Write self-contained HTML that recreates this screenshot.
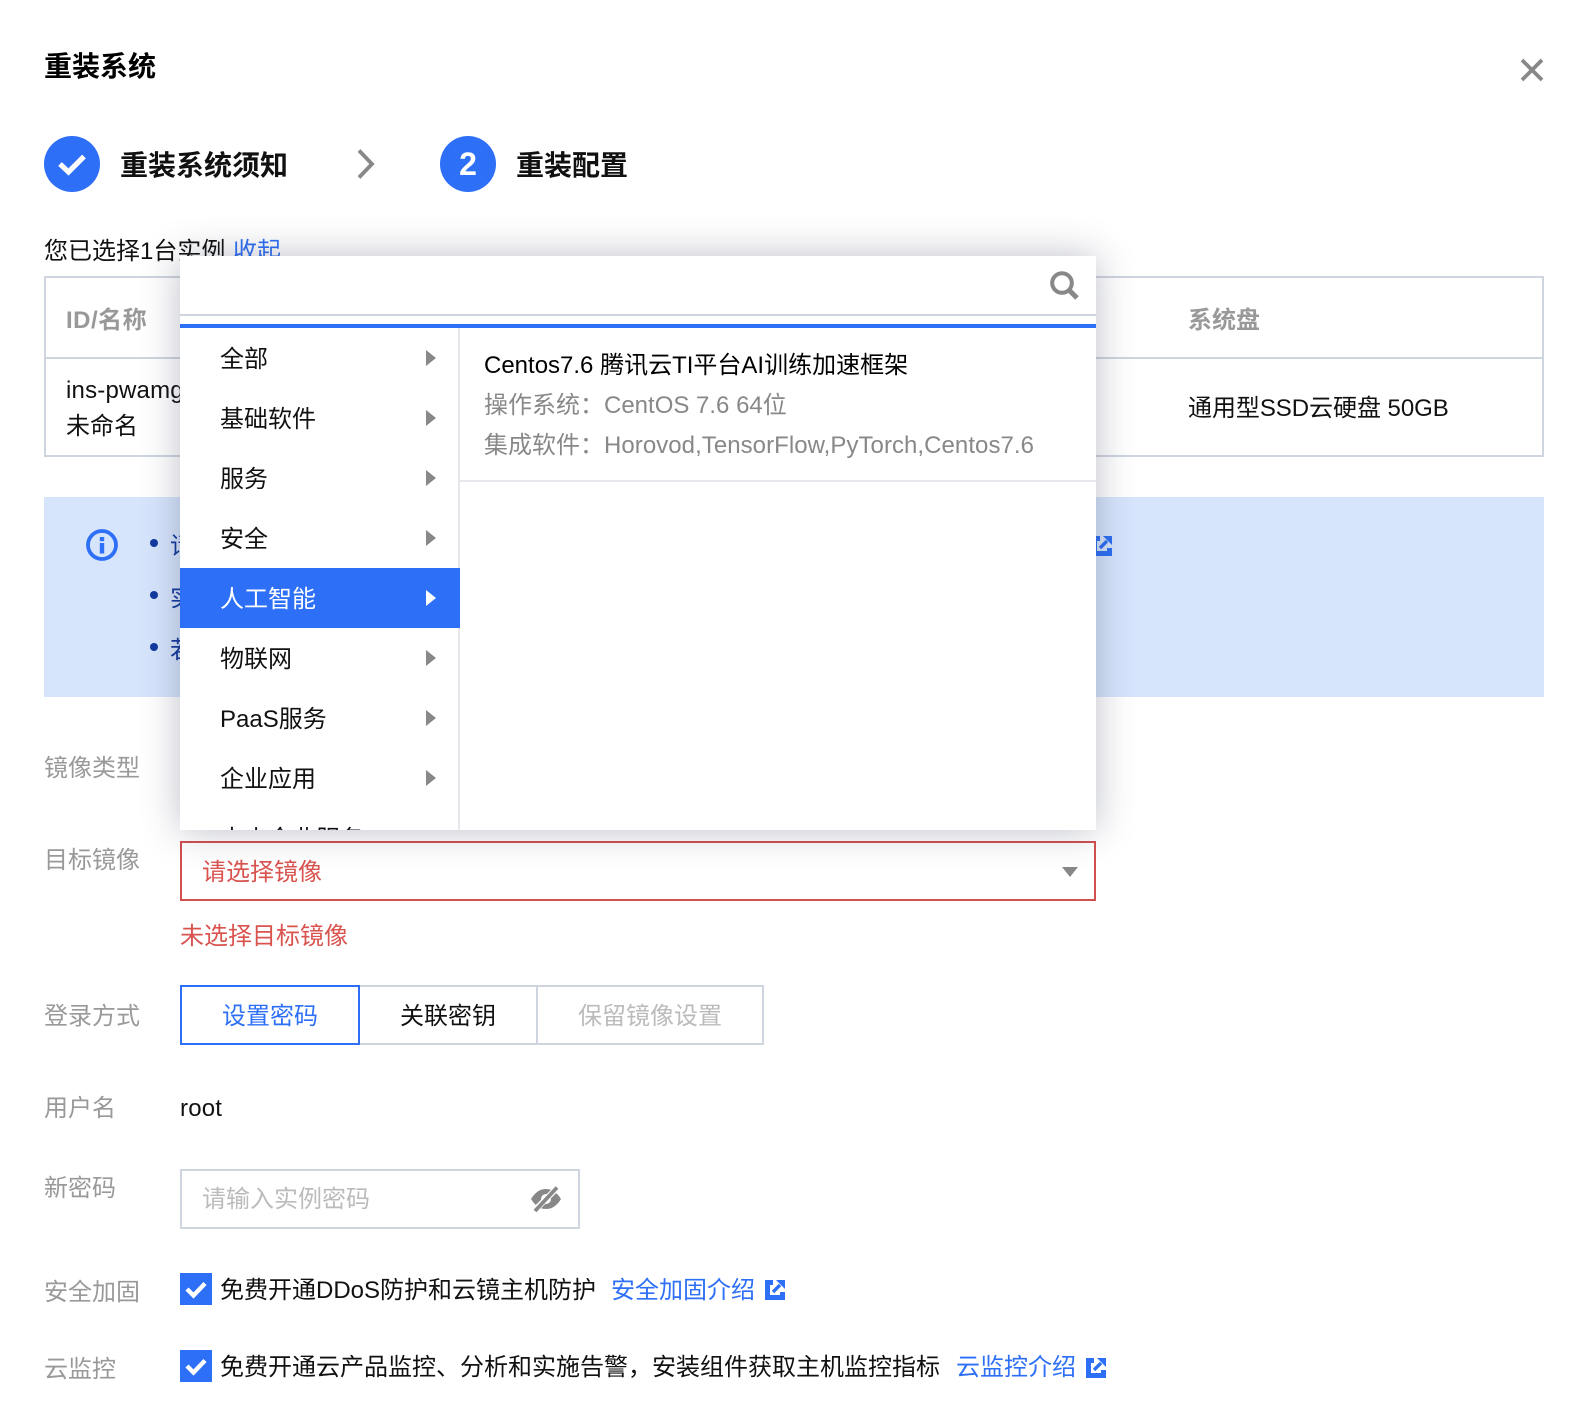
<!DOCTYPE html>
<html lang="zh">
<head>
<meta charset="utf-8">
<title>重装系统</title>
<style>
html,body{margin:0;padding:0;background:#fff}
body{width:1590px;height:1426px;position:relative;overflow:hidden;font-family:"Liberation Sans","Noto Sans CJK SC",sans-serif;font-size:24px;color:#111}
.t{position:absolute;white-space:nowrap;line-height:32px;height:32px}
.b{font-weight:700}
.l{color:#999}
.bl{color:#2d6ff6}
.r{color:#d9534f}
.g{color:#888}
.box{position:absolute;box-sizing:border-box}
svg{position:absolute;display:block}
.item{position:absolute;left:0;width:280px;height:60px}
.item span{position:absolute;left:40px;top:16px;line-height:32px;white-space:nowrap}
.item i{position:absolute;left:246px;top:22px;width:0;height:0;border-left:10px solid #888;border-top:8px solid transparent;border-bottom:8px solid transparent}
</style>
</head>
<body>
<div class="t b" style="left:44px;top:51px;font-size:28px;color:#000">重装系统</div>
<svg style="left:1520px;top:58px" width="24" height="24" viewBox="0 0 24 24"><path d="M2 2L22 22M22 2L2 22" stroke="#888" stroke-width="3.800" fill="none"/></svg>

<div class="box" style="left:44px;top:136px;width:56px;height:56px;border-radius:50%;background:#2d6ff6"></div>
<svg style="left:44px;top:136px" width="56" height="56" viewBox="0 0 56 56"><path d="M16 28L24.500 36L40 20.500" stroke="#fff" stroke-width="5.200" fill="none"/></svg>
<div class="t b" style="left:120px;top:150px;font-size:28px">重装系统须知</div>
<svg style="left:356px;top:149px" width="20" height="30" viewBox="0 0 20 30"><path d="M3 1.500L16 15L3 28.500" stroke="#888" stroke-width="3.800" fill="none"/></svg>
<div class="box" style="left:440px;top:136px;width:56px;height:56px;border-radius:50%;background:#2d6ff6;color:#fff;font-weight:700;font-size:32px;line-height:56px;text-align:center">2</div>
<div class="t b" style="left:516px;top:150px;font-size:28px">重装配置</div>

<div class="t" style="left:44px;top:236px">您已选择1台实例 <span class="bl" style="position:relative;left:1px">收起</span></div>

<div class="box" style="left:44px;top:276px;width:1500px;height:181px;border:2px solid #cfd5de"></div>
<div class="box" style="left:44px;top:357px;width:1500px;height:2px;background:#cfd5de"></div>
<div class="t b l" style="left:66px;top:305px;letter-spacing:.5px">ID/名称</div>
<div class="t" style="left:66px;top:375px;letter-spacing:.2px">ins-pwamg</div>
<div class="t" style="left:66px;top:411px">未命名</div>
<div class="t b l" style="left:1188px;top:305px">系统盘</div>
<div class="t" style="left:1188px;top:393px;letter-spacing:-.05px">通用型SSD云硬盘 50GB</div>

<div class="box" style="left:44px;top:497px;width:1500px;height:200px;background:#d6e5fc"></div>
<svg style="left:86px;top:529px" width="32" height="32" viewBox="0 0 32 32"><circle cx="16" cy="16" r="14" stroke="#2d6ff6" stroke-width="3.800" fill="none"/><rect x="13.800" y="14" width="4.400" height="10.500" fill="#2d6ff6"/><rect x="13.800" y="8" width="4.400" height="4.200" fill="#2d6ff6"/></svg>
<div class="box" style="left:150px;top:539px;width:8px;height:8px;border-radius:50%;background:#12399f"></div>
<div class="box" style="left:150px;top:591px;width:8px;height:8px;border-radius:50%;background:#12399f"></div>
<div class="box" style="left:150px;top:643px;width:8px;height:8px;border-radius:50%;background:#12399f"></div>
<div class="t" style="left:170px;top:531px;color:#12399f">请</div>
<div class="t" style="left:170px;top:583px;color:#12399f">实</div>
<div class="t" style="left:170px;top:635px;color:#12399f">若</div>
<svg style="left:1092px;top:536px" width="20" height="20" viewBox="0 0 20 20"><path d="M0 0H8V5H5V15H15V12H20V20H0Z" fill="#2d6ff6"/><path d="M11 0H20V9Z" fill="#2d6ff6"/><path d="M15 5L8 12" stroke="#2d6ff6" stroke-width="3.400"/></svg>

<div class="t l" style="left:44px;top:753px">镜像类型</div>
<div class="t l" style="left:44px;top:845px">目标镜像</div>
<div class="box" style="left:180px;top:841px;width:916px;height:60px;border:2px solid #d2504e"></div>
<div class="t r" style="left:202px;top:857px">请选择镜像</div>
<div class="box" style="left:1062px;top:867px;width:0;height:0;border-top:10px solid #888;border-left:8px solid transparent;border-right:8px solid transparent"></div>
<div class="t r" style="left:180px;top:921px">未选择目标镜像</div>

<div class="t l" style="left:44px;top:1001px">登录方式</div>
<div class="box" style="left:180px;top:985px;width:584px;height:60px;border:2px solid #cfd5de"></div>
<div class="box" style="left:536px;top:985px;width:2px;height:60px;background:#cfd5de"></div>
<div class="box bl" style="left:180px;top:985px;width:180px;height:60px;border:2px solid #2d6ff6;text-align:center;line-height:59px">设置密码</div>
<div class="box" style="left:360px;top:985px;width:176px;height:60px;text-align:center;line-height:63px">关联密钥</div>
<div class="box" style="left:537px;top:985px;width:226px;height:60px;text-align:center;line-height:63px;color:#bbb">保留镜像设置</div>

<div class="t l" style="left:44px;top:1093px">用户名</div>
<div class="t" style="left:180px;top:1093px;letter-spacing:.2px">root</div>

<div class="t l" style="left:44px;top:1173px">新密码</div>
<div class="box" style="left:180px;top:1169px;width:400px;height:60px;border:2px solid #cfd5de"></div>
<div class="t" style="left:202px;top:1184px;color:#bbb">请输入实例密码</div>
<svg style="left:530px;top:1184px" width="32" height="30" viewBox="0 0 32 30"><path d="M1 15C6 7 11 5 16 5C21 5 26 7 31 15C26 23 21 25 16 25C11 25 6 23 1 15Z" fill="#888"/><circle cx="16" cy="15" r="5" fill="#fff"/><circle cx="16" cy="15" r="2.500" fill="#aaa"/><path d="M4 27L28 3" stroke="#fff" stroke-width="6"/><path d="M5 27L27 3.500" stroke="#888" stroke-width="3.800"/></svg>

<div class="t l" style="left:44px;top:1277px">安全加固</div>
<div class="box" style="left:180px;top:1273px;width:32px;height:32px;background:#2d6ff6"></div>
<svg style="left:180px;top:1273px" width="32" height="32" viewBox="0 0 32 32"><path d="M7 16L13.500 22.500L25 10.500" stroke="#fff" stroke-width="4.400" fill="none"/></svg>
<div class="t" style="left:220px;top:1275px">免费开通DDoS防护和云镜主机防护</div>
<div class="t bl" style="left:611px;top:1275px">安全加固介绍</div>
<svg style="left:765px;top:1280px" width="20" height="20" viewBox="0 0 20 20"><path d="M0 0H8V5H5V15H15V12H20V20H0Z" fill="#2d6ff6"/><path d="M11 0H20V9Z" fill="#2d6ff6"/><path d="M15 5L8 12" stroke="#2d6ff6" stroke-width="3.400"/></svg>

<div class="t l" style="left:44px;top:1354px">云监控</div>
<div class="box" style="left:180px;top:1350px;width:32px;height:32px;background:#2d6ff6"></div>
<svg style="left:180px;top:1350px" width="32" height="32" viewBox="0 0 32 32"><path d="M7 16L13.500 22.500L25 10.500" stroke="#fff" stroke-width="4.400" fill="none"/></svg>
<div class="t" style="left:220px;top:1352px">免费开通云产品监控、分析和实施告警，安装组件获取主机监控指标</div>
<div class="t bl" style="left:956px;top:1352px">云监控介绍</div>
<svg style="left:1086px;top:1358px" width="20" height="20" viewBox="0 0 20 20"><path d="M0 0H8V5H5V15H15V12H20V20H0Z" fill="#2d6ff6"/><path d="M11 0H20V9Z" fill="#2d6ff6"/><path d="M15 5L8 12" stroke="#2d6ff6" stroke-width="3.400"/></svg>

<!-- popup -->
<div class="box" style="left:180px;top:256px;width:916px;height:574px;background:#fff;box-shadow:0 0 36px rgba(50,56,85,.32);overflow:hidden">
  <svg style="left:868px;top:12px" width="34" height="34" viewBox="0 0 34 34"><circle cx="14" cy="15" r="9.800" stroke="#888" stroke-width="4" fill="none"/><path d="M21 22L29 30" stroke="#888" stroke-width="5" fill="none"/></svg>
  <div class="box" style="left:0;top:58px;width:916px;height:2px;background:#cfd5de"></div>
  <div class="box" style="left:0;top:68px;width:916px;height:4px;background:#2d6ff6"></div>
  <div class="box" style="left:278px;top:72px;width:2px;height:502px;background:#e7e8ee"></div>
  <div class="item" style="top:72px"><span>全部</span><i></i></div>
  <div class="item" style="top:132px"><span>基础软件</span><i></i></div>
  <div class="item" style="top:192px"><span>服务</span><i></i></div>
  <div class="item" style="top:252px"><span>安全</span><i></i></div>
  <div class="item" style="top:312px;background:#2d6ff6;color:#fff"><span>人工智能</span><i style="border-left-color:#fff"></i></div>
  <div class="item" style="top:372px"><span>物联网</span><i></i></div>
  <div class="item" style="top:432px"><span>PaaS服务</span><i></i></div>
  <div class="item" style="top:492px"><span>企业应用</span><i></i></div>
  <div class="item" style="top:552px"><span>中小企业服务</span></div>
  <div class="t" style="left:304px;top:94px;color:#000">Centos7.6 腾讯云TI平台AI训练加速框架</div>
  <div class="t g" style="left:304px;top:134px">操作系统：</div>
  <div class="t g" style="left:424px;top:134px">CentOS 7.6 64位</div>
  <div class="t g" style="left:304px;top:174px">集成软件：</div>
  <div class="t g" style="left:424px;top:174px;letter-spacing:.05px">Horovod,TensorFlow,PyTorch,Centos7.6</div>
  <div class="box" style="left:280px;top:224px;width:636px;height:2px;background:#e7e8ee"></div>
</div>
</body>
</html>
